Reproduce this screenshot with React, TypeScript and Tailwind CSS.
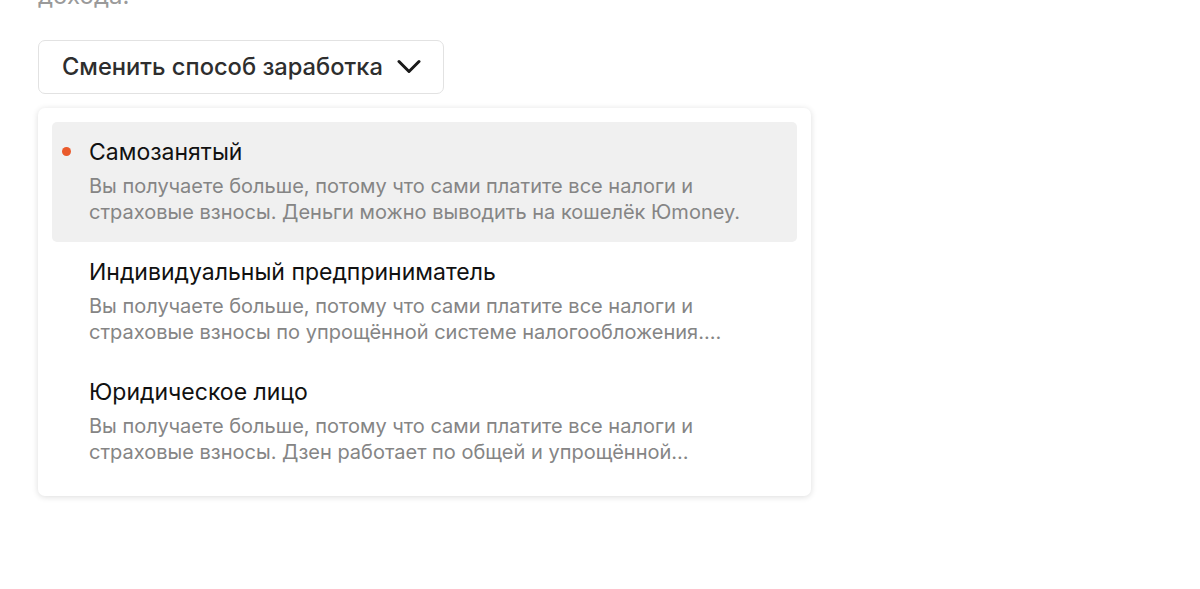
import React from "react";

interface Option {
  id: string;
  title: string;
  description: string;
  active?: boolean;
}

const options: Option[] = [
  {
    id: "self",
    title: "Самозанятый",
    description:
      "Вы получаете больше, потому что сами платите все налоги и страховые взносы. Деньги можно выводить на кошелёк Юmoney.",
    active: true,
  },
  {
    id: "ip",
    title: "Индивидуальный предприниматель",
    description:
      "Вы получаете больше, потому что сами платите все налоги и страховые взносы по упрощённой системе налогообложения. Выплаты приходят на расчётный счёт.",
  },
  {
    id: "legal",
    title: "Юридическое лицо",
    description:
      "Вы получаете больше, потому что сами платите все налоги и страховые взносы. Дзен работает по общей и упрощённой…",
  },
];

const ChevronDown = () => (
  <svg width="24" height="16" viewBox="0 0 24 16" fill="none" className="text-[#1a1a1a]">
    <path d="M2 2.5L12 12.5L22 2.5" stroke="currentColor" strokeWidth="3" strokeLinecap="round" strokeLinejoin="round" />
  </svg>
);

const OptionItem: React.FC<{ option: Option }> = ({ option }) => (
  <div
    className={`relative rounded-[5px] pl-[37px] pr-4 pt-4 pb-[17px] ${
      option.active ? "bg-[#f0f0f0]" : ""
    }`}
  >
    {option.active && (
      <span className="absolute left-[10px] top-[25px] h-[9px] w-[9px] rounded-full bg-[#ea5a2b]" />
    )}
    <div className="text-[23px] leading-[28px] text-[#111]">{option.title}</div>
    <div className="mt-[7px] w-[680px] text-[20px] leading-[26px] text-[#858585] line-clamp-2">
      {option.description}
    </div>
  </div>
);

export default function App() {
  return (
    <div
      className="min-h-[589px] w-full overflow-hidden bg-white pl-[38px]"
      style={{ fontFamily: "Inter, 'Noto Sans', 'Liberation Sans', sans-serif" }}
    >
      <p className="-mt-[19px] text-[24px] leading-[30px] text-[#9a9a9a]">дохода.</p>

      <button className="mt-[29px] flex h-[54px] w-[406px] items-center gap-[14px] rounded-[7px] border border-[#e2e2e2] bg-white pl-[23px] text-[23.7px] font-medium text-[#2e2e2e]">
        Сменить способ заработка
        <ChevronDown />
      </button>

      <div className="mt-[14px] w-[773px] rounded-[7px] bg-white p-[14px] shadow-[0_1px_6px_rgba(0,0,0,0.14)]">
        {options.map((o) => (
          <OptionItem key={o.id} option={o} />
        ))}
      </div>
    </div>
  );
}
